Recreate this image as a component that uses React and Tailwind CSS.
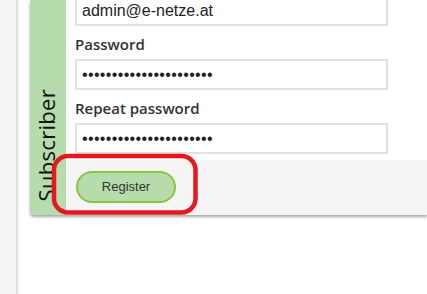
import React from "react";

const Field = ({ label, type = "text", value, first }) => (
    <div className="flex flex-col">
        {label && (
            <label className="mt-[7px] mb-[4px] font-['Open_Sans',sans-serif] text-[15px] font-semibold leading-[22px] text-[#333]">
                {label}
            </label>
        )}
        <input
            type={type}
            value={value}
            readOnly
            className={`h-[31px] w-full border-2 border-[#e2e2e2] bg-white pl-[5px] font-['Liberation_Sans',Arial,sans-serif] text-[16px] text-[#222] outline-none ${type === "password" ? "tracking-[0.35px]" : ""} ${first ? "-mt-[5px]" : ""}`}
        />
    </div>
);

export default function App() {
    const pw = "aaaaaaaaaaaaaaaaaaaaaa";

    return (
        <div className="relative flex h-[294px] w-full overflow-hidden bg-white">
            {/* left gutter */}
            <div className="w-[16px] shrink-0 bg-[#f4f4f4]" />
            <div className="w-[4px] shrink-0 bg-gradient-to-r from-[#d9d9d9] to-white" />

            {/* card */}
            <div className="ml-[10px] flex h-[215px] flex-1 rounded-bl-[4px] shadow-[0_2px_3px_rgba(0,0,0,0.35)]">
                <div className="flex w-[36px] shrink-0 flex-col items-center justify-end rounded-bl-[4px] bg-[#b6dbac] pb-[14px]">
                    <span className="mr-[5px] rotate-180 font-['Open_Sans',sans-serif] text-[22px] leading-[28px] tracking-[0.3px] text-[#111] [writing-mode:vertical-rl]">
                        Subscriber
                    </span>
                </div>

                <div className="flex flex-1 flex-col bg-white">
                    <div className="h-[160px] pl-[9px] pr-[39px]">
                        <Field value="admin@e-netze.at" first />
                        <Field label="Password" type="password" value={pw} />
                        <Field label="Repeat password" type="password" value={pw} />
                    </div>
                    <div className="h-[55px] bg-[#f5f5f5] pl-[10px] pt-[11px]">
                        <button className="h-[32px] w-[100px] rounded-full border-2 border-[#8cc63e] bg-[#b6dcac] font-['Liberation_Sans',Arial,sans-serif] text-[13px] text-[#333]">
                            Register
                        </button>
                    </div>
                </div>
            </div>

            {/* red annotation */}
            <svg className="pointer-events-none absolute left-0 top-0" width="427" height="294">
                <rect x="54" y="156" width="141.5" height="56.5" rx="14" fill="none" stroke="#e8161e" strokeWidth="4.5" />
            </svg>
        </div>
    );
}
